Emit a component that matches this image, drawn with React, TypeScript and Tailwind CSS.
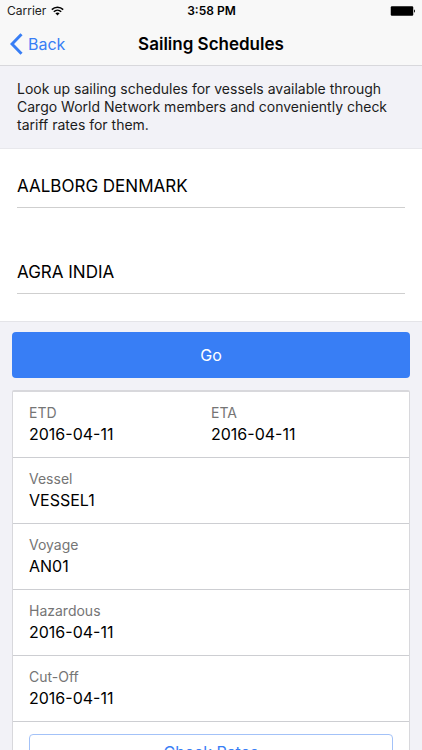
import { useState } from "react";

type Detail = { label: string; value: string };

const rows: Detail[][] = [
  [
    { label: "ETD", value: "2016-04-11" },
    { label: "ETA", value: "2016-04-11" },
  ],
  [{ label: "Vessel", value: "VESSEL1" }],
  [{ label: "Voyage", value: "AN01" }],
  [{ label: "Hazardous", value: "2016-04-11" }],
  [{ label: "Cut-Off", value: "2016-04-11" }],
];

function WifiIcon() {
  return (
    <svg width="13" height="10" viewBox="0 0 13 10" fill="none" stroke="#000" aria-hidden="true">
      <path d="M0.8 3.6C4 0.4 9 0.4 12.2 3.6" strokeWidth="1.5" />
      <path d="M2.8 5.7C4.9 3.6 8.1 3.6 10.2 5.7" strokeWidth="1.5" />
      <path d="M6.5 9.4L4.4 7.3C5.6 6.2 7.4 6.2 8.6 7.3Z" fill="#000" stroke="none" />
    </svg>
  );
}

function BatteryIcon() {
  return (
    <svg width="26" height="10" viewBox="0 0 26 10" aria-hidden="true">
      <rect x="0.75" y="0.25" width="22.5" height="9.5" rx="1.2" fill="#000" />
      <path d="M24 3.4C25.3 3.6 25.3 6.4 24 6.6Z" fill="#000" />
    </svg>
  );
}

function StatusBar() {
  return (
    <div className="grid h-[22px] grid-cols-3 items-center pr-1.5 pl-[7px] text-[12px] leading-4 text-black">
      <span className="flex items-center gap-[5px] text-[#222]">
        Carrier
        <WifiIcon />
      </span>
      <span className="text-center font-semibold">3:58 PM</span>
      <span className="flex justify-end">
        <BatteryIcon />
      </span>
    </div>
  );
}

function NavBar() {
  return (
    <div className="grid h-[43px] grid-cols-[1fr_auto_1fr] items-center px-2.5">
      <button type="button" className="flex items-center gap-[5px] justify-self-start text-[16px] leading-6 text-[#387ef5]">
        <svg width="13" height="22" viewBox="0 0 13 22" fill="none" stroke="#387ef5" strokeWidth="3" aria-hidden="true">
          <path d="M11.5 1.2L2 11L11.5 20.8" />
        </svg>
        Back
      </button>
      <h1 className="text-[17px] leading-6 font-semibold text-black">Sailing Schedules</h1>
    </div>
  );
}

function PortField({ label, initial }: { label: string; initial: string }) {
  const [port, setPort] = useState(initial);
  return (
    <div className="pt-4 pb-[27px]">
      <input
        aria-label={label}
        value={port}
        onChange={(e) => setPort(e.target.value)}
        className="block h-[43px] w-full border-b border-[#cfcfcf] bg-transparent text-[17px] text-black outline-none"
      />
    </div>
  );
}

export default function App() {
  return (
    <div className="flex h-screen flex-col overflow-hidden bg-[#f2f2f7] font-['Inter','Liberation_Sans',sans-serif]">
      <header className="shrink-0 border-b border-[#d8d8dc] bg-[#f8f8f8]">
        <StatusBar />
        <NavBar />
      </header>
      <main className="min-h-0 flex-1 overflow-y-auto [scrollbar-width:none]">
        <p className="border-b border-[#e8e8ec] px-[17px] py-3.5 text-[14px] leading-[18px] text-[#1c1c1c]">
          Look up sailing schedules for vessels available through Cargo World Network members and conveniently check
          tariff rates for them.
        </p>
        <form onSubmit={(e) => e.preventDefault()}>
          <div className="border-b border-[#e4e4e8] bg-white px-[17px]">
            <PortField label="Origin" initial="AALBORG DENMARK" />
            <PortField label="Destination" initial="AGRA INDIA" />
          </div>
          <div className="px-3 pt-2.5">
            <button type="submit" className="block h-[46px] w-full rounded bg-[#387ef5] text-[16px] text-white">
              Go
            </button>
          </div>
        </form>
        <section className="mx-3 my-3 rounded-xs border border-t-2 border-[#d8d8dc] bg-white">
          {rows.map((row) => (
            <dl key={row[0].label} className="grid h-[66px] grid-cols-2 border-b border-[#cdced2] px-4 pt-[11px]">
              {row.map((item) => (
                <div key={item.label}>
                  <dt className="text-[14px] leading-5 text-[#757575]">{item.label}</dt>
                  <dd className="text-[16px] leading-[22px] text-black">{item.value}</dd>
                </div>
              ))}
            </dl>
          ))}
          <div className="px-4 py-3">
            <button
              type="button"
              className="block h-9 w-full rounded border border-[#a3c2f8] text-[16px] text-[#387ef5]"
            >
              Check Rates
            </button>
          </div>
        </section>
      </main>
    </div>
  );
}
